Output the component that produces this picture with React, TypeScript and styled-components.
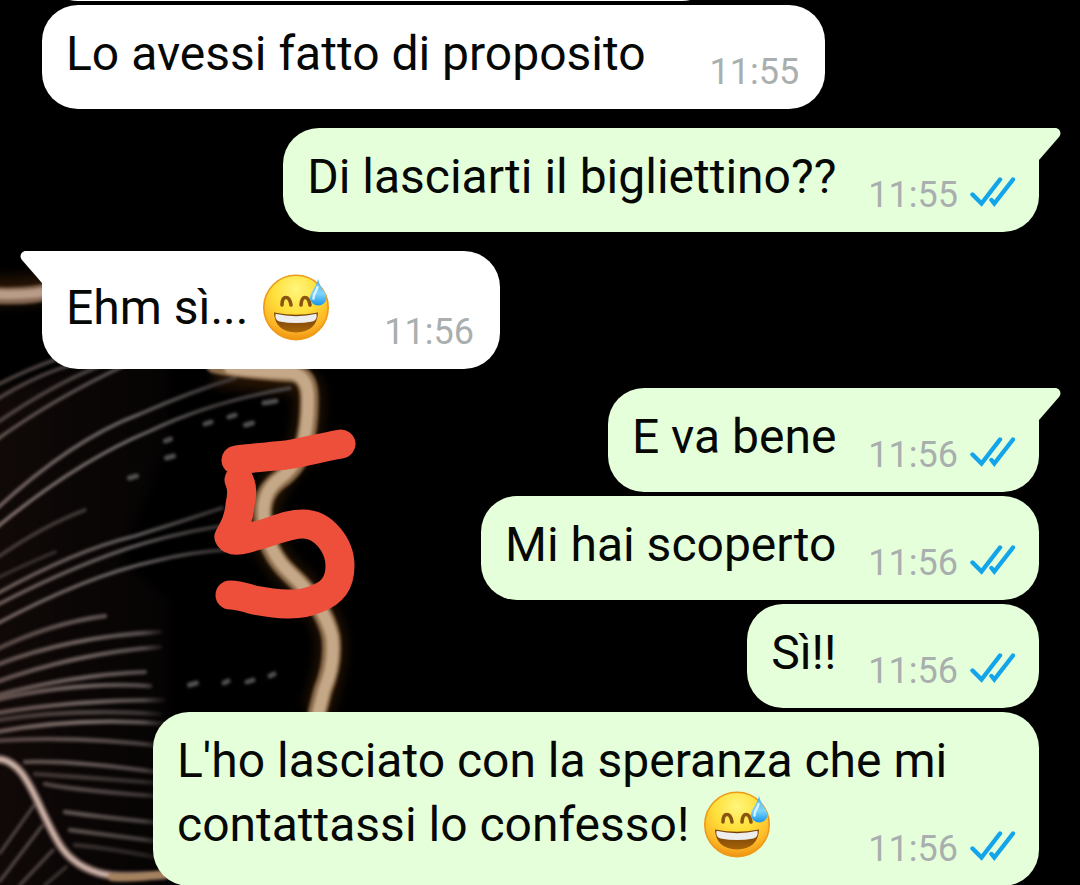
import React from "react";
import styled, { createGlobalStyle, css } from "styled-components";

const GlobalStyle = createGlobalStyle`
  * { box-sizing: border-box; }
  body { margin: 0; background: #000; font-family: Roboto, "Noto Sans", sans-serif; }
`;

const Screen = styled.main`
  position: relative;
  min-height: 100vh;
  overflow: hidden;
  background: #000;
`;

const Wallpaper = styled.svg`
  position: absolute;
  top: 0;
  left: 0;
`;

const Chat = styled.ol`
  position: relative;
  display: flex;
  flex-direction: column;
  gap: 4px;
  margin: 0;
  padding: 0 41px 0 42px;
  list-style: none;
`;

const PreviousEdge = styled.li`
  display: flex;
  align-items: flex-end;
  width: 676px;
  max-width: 100%;
  height: 1px;
  overflow: hidden;

  &::after {
    content: "";
    flex: 1;
    height: 104px;
    border-radius: 36px;
    background: #fff;
  }
`;

type Side = "in" | "out";

const Row = styled.li<{ $side: Side; $first: boolean }>`
  display: flex;
  justify-content: ${(p) => (p.$side === "in" ? "flex-start" : "flex-end")};
  margin-top: ${(p) => (p.$first ? 15 : 0)}px;
`;

const Bubble = styled.div<{ $side: Side; $tail: boolean }>`
  position: relative;
  max-width: min(100%, 886px);
  padding: 21px 24px 16px;
  border-radius: 36px;
  color: #050805;
  font-size: 48px;
  line-height: 56px;
  ${(p) =>
    p.$side === "in"
      ? css`
          background: #fff;
          padding-right: 26px;
        `
      : css`
          background: #e5ffdb;
        `}
  ${(p) =>
    p.$tail &&
    (p.$side === "in"
      ? css`
          border-top-left-radius: 0;
        `
      : css`
          border-top-right-radius: 0;
        `)}
`;

const TailShape = styled.svg<{ $side: Side }>`
  position: absolute;
  top: 0;
  ${(p) =>
    p.$side === "in"
      ? css`
          right: 100%;
          fill: #fff;
        `
      : css`
          left: 100%;
          fill: #e5ffdb;
        `}
`;

const metaGap = (side: Side, tall: boolean) => {
  if (side === "out") return 32;
  return tall ? 54 : 64;
};

const Meta = styled.span<{ $side: Side; $tall: boolean }>`
  float: right;
  display: flex;
  align-items: center;
  gap: 12px;
  margin-top: ${(p) => (p.$tall ? 39 : 25)}px;
  margin-left: ${(p) => metaGap(p.$side, p.$tall)}px;
  color: #a9afae;
  font-size: 36px;
  line-height: 42px;
`;

const EmojiSvg = styled.svg`
  display: inline-block;
  width: 70px;
  height: 70px;
  vertical-align: -18px;
`;

function Emoji() {
  const id = React.useId();
  return (
    <EmojiSvg viewBox="0 0 70 70" role="img" aria-label="sorriso con goccia di sudore">
      <defs>
        <radialGradient id={id + "f"} cx="0.5" cy="0.22" r="0.8">
          <stop offset="0" stopColor="#fff67c" />
          <stop offset="0.45" stopColor="#ffdf3a" />
          <stop offset="0.8" stopColor="#fdb527" />
          <stop offset="1" stopColor="#ec8d0c" />
        </radialGradient>
        <linearGradient id={id + "m"} x1="0" y1="0" x2="0" y2="1">
          <stop offset="0" stopColor="#6e3b08" />
          <stop offset="1" stopColor="#a76508" />
        </linearGradient>
        <linearGradient id={id + "d"} x1="0" y1="0" x2="0" y2="1">
          <stop offset="0" stopColor="#4dafe4" />
          <stop offset="0.55" stopColor="#7fd5fb" />
          <stop offset="1" stopColor="#1594ea" />
        </linearGradient>
      </defs>
      <circle cx="36" cy="35.500" r="32.200" fill={`url(#${id}f)`} stroke="#ee9a18" strokeWidth="1.600" />
      <path d="M22 33C22 27 24 25.500 26 25.500S30 27 31 33M41 33C41.500 27 43 25.500 45 25.500S49 27 50 33" fill="none" stroke="#8a5510" strokeWidth="3.600" strokeLinecap="round" />
      <path d="M14 40.500Q36 45 58 40.500Q57 60 36 60.500Q15 60 14 40.500Z" fill={`url(#${id}m)`} />
      <path d="M15.500 41.800Q36 46.500 56.500 41.800Q57.500 48 52.500 49.500Q36 52.500 19.500 49.500Q14.500 48 15.500 41.800Z" fill="#eeeeee" />
      <path d="M58 7C56 16 50 20 50 26A8.200 7.500 0 0 0 66.400 26C66.400 20 60 16 58 7Z" fill={`url(#${id}d)`} />
      <path d="M57.500 15C56.500 20 53 22 53.500 26.500" fill="none" stroke="#d9f4ff" strokeWidth="2.400" strokeLinecap="round" />
    </EmojiSvg>
  );
}

function ReadTicks() {
  return (
    <svg width="45" height="42" viewBox="0 0 45 42" role="img" aria-label="Letto" fill="none" stroke="#12a5ea" strokeWidth="4.400" strokeLinecap="round">
      <path d="M2.500 20.500L11.500 29.500L30 5.500" strokeLinejoin="miter" />
      <path d="M21.500 26L24.300 29.500L43 5.500" />
    </svg>
  );
}

function Tail({ side }: { side: Side }) {
  return (
    <TailShape $side={side} width="22" height="33" viewBox="0 0 22 33" aria-hidden="true">
      {side === "out" ? (
        <path d="M0 0H16C21 0 23 5.500 20 9L0 32Z" />
      ) : (
        <path d="M22 0H6C1 0-1 5.500 2 9L22 32Z" />
      )}
    </TailShape>
  );
}

interface Message {
  side: Side;
  text: string;
  time: string;
  emoji?: boolean;
  tail?: boolean;
}

const messages: Message[] = [
  { side: "in", text: "Lo avessi fatto di proposito", time: "11:55" },
  { side: "out", text: "Di lasciarti il bigliettino??", time: "11:55", tail: true },
  { side: "in", text: "Ehm sì...", time: "11:56", emoji: true, tail: true },
  { side: "out", text: "E va bene", time: "11:56", tail: true },
  { side: "out", text: "Mi hai scoperto", time: "11:56" },
  { side: "out", text: "Sì!!", time: "11:56" },
  { side: "out", text: "L'ho lasciato con la speranza che mi contattassi lo confesso!", time: "11:56", emoji: true },
];

// Fine fibres of the wing: [path, opacity]
const longFibres: [string, number][] = [
  ["M-9 388Q30 368 60 358", 0.6],
  ["M-9 403Q40 372 82 362", 0.6],
  ["M-9 427Q55 382 110 362", 0.6],
  ["M-9 444Q50 400 130 363", 0.75],
  ["M-9 514Q70 440 140 414Q190 392 235 378", 0.9],
  ["M-9 532Q75 462 150 431Q210 402 290 388", 1],
  ["M-9 562Q40 527 85 510", 0.5],
  ["M-9 581Q35 560 55 552", 0.4],
  ["M-9 597Q75 550 135 536Q180 522 222 508", 0.85],
  ["M-9 608Q80 562 145 543Q190 530 235 524", 0.85],
  ["M-9 627Q85 576 155 561Q190 552 225 550", 0.9],
];

const shortFibres: [string, number][] = [
  ["M-9 652Q50 623 105 616", 0.8],
  ["M-9 667Q70 636 160 632", 0.9],
  ["M-9 684Q75 653 160 647", 0.9],
  ["M-9 697Q70 675 145 672", 0.9],
  ["M-9 701Q75 681 150 686", 0.9],
  ["M-9 714Q70 700 165 700", 0.9],
  ["M-9 721Q70 708 160 714", 0.6],
  ["M-9 733Q75 716 170 724", 1],
  ["M-9 741Q75 735 170 747", 0.75],
  ["M25 762Q75 760 170 774", 0.8],
  ["M35 774Q80 777 170 784", 0.5],
  ["M45 784Q80 791 170 797", 0.65],
  ["M65 812Q100 817 170 824", 0.75],
  ["M70 830Q110 835 170 843", 0.7],
  ["M75 845Q110 848 170 860", 0.4],
];

const feathers: [string, number][] = [
  ["M0 853L35 804", 0.65],
  ["M0 881L42 826", 0.7],
  ["M20 885L53 850", 0.65],
  ["M45 885L66 867", 0.5],
];

const specks: [number, number, number][] = [
  [133, 477, 7], [170, 457, 7], [168, 440, 5], [208, 423, 6],
  [232, 416, 6], [249, 424, 7], [270, 402, 12], [193, 684, 7],
  [226, 682, 4], [250, 681, 6], [272, 675, 4],
];

export default function App() {
  return (
    <>
      <GlobalStyle />
      <Screen>
        <Wallpaper width="1080" height="885" viewBox="0 0 1080 885" fill="none" aria-hidden="true">
          <defs>
            <filter id="soft" colorInterpolationFilters="sRGB" filterUnits="userSpaceOnUse" x="-40" y="200" width="500" height="740">
              <feGaussianBlur stdDeviation="1.600" />
            </filter>
            <filter id="glow" colorInterpolationFilters="sRGB" filterUnits="userSpaceOnUse" x="-100" y="150" width="600" height="840">
              <feGaussianBlur stdDeviation="6" />
            </filter>
            <linearGradient id="longFade" gradientUnits="userSpaceOnUse" x1="0" y1="0" x2="290" y2="0">
              <stop offset="0" stopColor="#83716c" />
              <stop offset="0.45" stopColor="#716c6b" />
              <stop offset="0.75" stopColor="#453e3e" />
              <stop offset="1" stopColor="#4c4a4a" />
            </linearGradient>
            <linearGradient id="shortFade" gradientUnits="userSpaceOnUse" x1="0" y1="0" x2="168" y2="0">
              <stop offset="0" stopColor="#6c5955" />
              <stop offset="0.5" stopColor="#776b67" />
              <stop offset="0.85" stopColor="#5c5352" />
              <stop offset="1" stopColor="#5c5352" stopOpacity="0" />
            </linearGradient>
            <linearGradient id="haze" gradientUnits="userSpaceOnUse" x1="0" y1="0" x2="170" y2="0">
              <stop offset="0" stopColor="#100908" />
              <stop offset="1" stopColor="#050303" />
            </linearGradient>
          </defs>
          <g filter="url(#glow)">
            <path d="M-40 400L170 340L170 440L120 560L170 600V940H-40Z" fill="url(#haze)" />
            <path d="M-20 290Q28 293 60 285M215 372Q245 376 294 379Q308 381 309 395Q310 425 303 448Q263 490 263 519Q266 552 290 574Q325 606 331 637Q334 664 317 712" stroke="#241304" strokeWidth="28" />
          </g>
          <g filter="url(#soft)" strokeLinecap="round">
            <g stroke="url(#longFade)" strokeWidth="3.500">
              {longFibres.map(([d, opacity]) => (
                <path key={d} d={d} opacity={opacity} />
              ))}
            </g>
            <g stroke="url(#shortFade)" strokeWidth="4.600">
              {shortFibres.map(([d, opacity]) => (
                <path key={d} d={d} opacity={opacity} />
              ))}
            </g>
            <g stroke="#6c605d" strokeWidth="3.500">
              {feathers.map(([d, opacity]) => (
                <path key={d} d={d} opacity={opacity} />
              ))}
            </g>
            <g stroke="#666464" strokeWidth="5">
              {specks.map(([x, y, w]) => (
                <path key={`${x}-${y}`} d={`M${x - w / 2} ${y + 1}L${x + w / 2} ${y - 1}`} opacity="0.8" />
              ))}
            </g>
            <path d="M-8 295Q28 298 60 289" stroke="#836752" strokeWidth="17" />
            <path d="M-8 294Q28 297 60 289" stroke="#b89c87" strokeWidth="9" />
            <path d="M215 364Q245 370 294 373Q308 376 309 395Q310 425 303 448Q296 469 279 480Q260 494 263 519Q266 552 290 574Q325 606 331 637Q334 664 323 690L316 718" stroke="#8c6d4c" strokeWidth="19" />
            <path d="M230 368Q260 372 292 373Q307 376 308 395Q309 425 302 448Q294 469 278 480Q261 494 264 519Q267 552 291 574Q325 606 332 637Q335 664 324 690L317 718" stroke="#c4a888" strokeWidth="12" />
            <path d="M-5 759C20 757 32 790 45 817S65 857 84 867S115 877 165 875" stroke="#7a625c" strokeWidth="9" />
            <path d="M-5 759C20 757 32 790 45 817S65 857 84 867S115 877 165 875" stroke="#d0b8ad" strokeWidth="4" />
            <path d="M112 877Q135 879 170 873" stroke="#a5825f" strokeWidth="8" />
          </g>
          <path
            d="M341 444C318 448 306 452 286 455C266 457 251 458 236 460M239 480C243 488 242 496 240 505C239 518 235 526 229 537C234 544 247 538 263 534C279 529 289 524 303 524C323 524 340 545 340 566C340 585 330 594 316 599C299 607 276 604 254 600C246 598 240 595 230 595"
            stroke="#ee4f3a"
            strokeWidth="29"
            strokeLinecap="round"
            strokeLinejoin="round"
          />
        </Wallpaper>
        <Chat>
          <PreviousEdge aria-hidden="true" />
          {messages.map((m) => (
            <Row key={m.text} $side={m.side} $first={!!m.tail}>
              <Bubble $side={m.side} $tail={!!m.tail}>
                {m.tail && <Tail side={m.side} />}
                {m.text}
                {m.emoji && (
                  <>
                    {" "}
                    <Emoji />
                  </>
                )}
                <Meta $side={m.side} $tall={!!m.emoji}>
                  <time>{m.time}</time>
                  {m.side === "out" && <ReadTicks />}
                </Meta>
              </Bubble>
            </Row>
          ))}
        </Chat>
      </Screen>
    </>
  );
}
